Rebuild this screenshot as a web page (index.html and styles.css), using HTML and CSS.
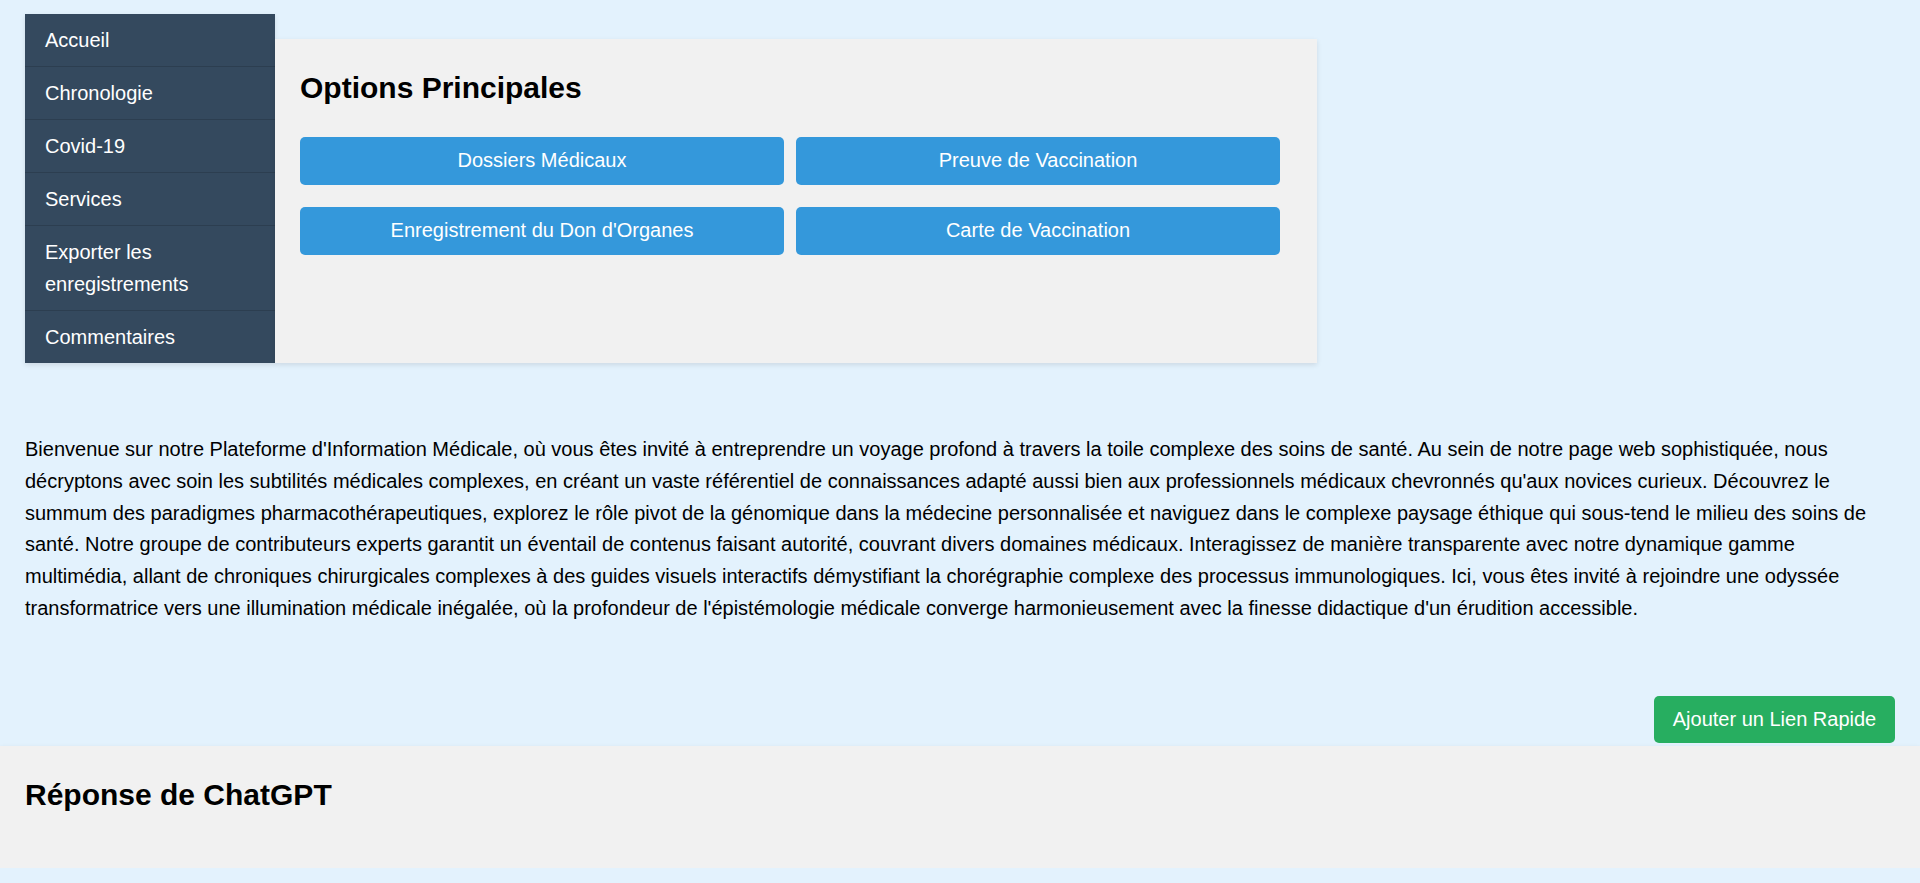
FILE: index.html
```html
<!DOCTYPE html>
<html lang="fr">
<head>
<meta charset="utf-8">
<title>Plateforme d'Information Médicale</title>
<link rel="stylesheet" href="styles.css">
</head>
<body>
<div class="page">
  <div class="top">
    <nav class="sidebar">
      <a class="nav-item" href="#">Accueil</a>
      <a class="nav-item" href="#">Chronologie</a>
      <a class="nav-item" href="#">Covid-19</a>
      <a class="nav-item" href="#">Services</a>
      <a class="nav-item" href="#">Exporter les enregistrements</a>
      <a class="nav-item" href="#">Commentaires</a>
    </nav>
    <section class="panel">
      <h2 class="panel-title">Options Principales</h2>
      <div class="options">
        <button class="opt-btn">Dossiers Médicaux</button>
        <button class="opt-btn">Preuve de Vaccination</button>
        <button class="opt-btn">Enregistrement du Don d'Organes</button>
        <button class="opt-btn">Carte de Vaccination</button>
      </div>
    </section>
  </div>
  <p class="intro">Bienvenue sur notre Plateforme d'Information Médicale, où vous êtes invité à entreprendre un voyage profond à travers la toile complexe des soins de santé. Au sein de notre page web sophistiquée, nous décryptons avec soin les subtilités médicales complexes, en créant un vaste référentiel de connaissances adapté aussi bien aux professionnels médicaux chevronnés qu'aux novices curieux. Découvrez le summum des paradigmes pharmacothérapeutiques, explorez le rôle pivot de la génomique dans la médecine personnalisée et naviguez dans le complexe paysage éthique qui sous-tend le milieu des soins de santé. Notre groupe de contributeurs experts garantit un éventail de contenus faisant autorité, couvrant divers domaines médicaux. Interagissez de manière transparente avec notre dynamique gamme multimédia, allant de chroniques chirurgicales complexes à des guides visuels interactifs démystifiant la chorégraphie complexe des processus immunologiques. Ici, vous êtes invité à rejoindre une odyssée transformatrice vers une illumination médicale inégalée, où la profondeur de l'épistémologie médicale converge harmonieusement avec la finesse didactique d'un érudition accessible.</p>
  <div class="quick-row">
    <button class="quick-btn">Ajouter un Lien Rapide</button>
  </div>
</div>
<section class="chat">
  <h2 class="chat-title">Réponse de ChatGPT</h2>
</section>
</body>
</html>
```

FILE: styles.css
```css
* {
  box-sizing: border-box;
}

body {
  margin: 0;
  background: #e3f2fd;
  font-family: "Liberation Sans", Arial, sans-serif;
  color: #000;
}

.page {
  padding: 14px 25px 0;
}

.top {
  display: flex;
  align-items: stretch;
}

.sidebar {
  width: 250px;
  flex: none;
  background: #34495e;
  display: flex;
  flex-direction: column;
  box-shadow: 0 2px 5px rgba(0, 0, 0, 0.1);
}

.nav-item {
  display: block;
  padding: 10px 20px;
  font-size: 20px;
  line-height: 32px;
  color: #ffffff;
  text-decoration: none;
  border-bottom: 1px solid #2c3e50;
}

.nav-item:last-child {
  border-bottom: none;
}

.panel {
  width: 1042px;
  margin-top: 25px;
  background: #f1f1f1;
  padding: 32px 25px 0;
  box-shadow: 0 2px 5px rgba(0, 0, 0, 0.1);
}

.panel-title {
  margin: 0;
  font-size: 30px;
  font-weight: bold;
  line-height: 34.5px;
}

.options {
  margin-top: 31px;
  display: grid;
  grid-template-columns: 484px 484px;
  column-gap: 12px;
  row-gap: 22px;
}

.opt-btn {
  height: 48px;
  background: #3498db;
  color: #ffffff;
  border: none;
  border-radius: 5px;
  font-family: "Liberation Sans", Arial, sans-serif;
  font-size: 20px;
  padding: 0 10px;
}

.intro {
  margin: 71px 0 0;
  font-size: 20px;
  line-height: 31.75px;
}

.quick-row {
  display: flex;
  justify-content: flex-end;
  margin-top: 71px;
  margin-bottom: 3px;
}

.quick-btn {
  width: 241px;
  height: 47px;
  background: #27ae60;
  color: #ffffff;
  border: none;
  border-radius: 5px;
  font-family: "Liberation Sans", Arial, sans-serif;
  font-size: 20px;
  padding: 0;
}

.chat {
  height: 122px;
  background: #f1f1f1;
  padding: 32px 25px 0;
  box-shadow: 0 2px 5px rgba(0, 0, 0, 0.1);
}

.chat-title {
  margin: 0;
  font-size: 30px;
  font-weight: bold;
  line-height: 34.5px;
}
```
